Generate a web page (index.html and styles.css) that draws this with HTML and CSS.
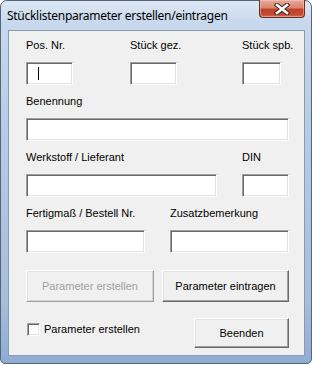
FILE: index.html
```html
<!DOCTYPE html>
<html>
<head>
<meta charset="utf-8">
<link rel="stylesheet" href="styles.css">
</head>
<body>
<div class="window">
  <div class="titlebar">
    <span class="title">Stücklistenparameter erstellen/eintragen</span>
    <div class="close">
      <svg width="16" height="12" viewBox="0 0 16 12">
        <path d="M3 2 L13 10 M13 2 L3 10" stroke="#3a2a28" stroke-width="4.6" stroke-linecap="square" fill="none"/>
        <path d="M3 2 L13 10 M13 2 L3 10" stroke="#ffffff" stroke-width="2.6" stroke-linecap="square" fill="none"/>
      </svg>
    </div>
  </div>
  <div class="client">
    <div class="row row1">
      <div class="field"><div class="label">Pos. Nr.</div><div class="input"><span class="caret"></span></div></div>
      <div class="field"><div class="label">Stück gez.</div><div class="input"></div></div>
      <div class="field"><div class="label">Stück spb.</div><div class="input"></div></div>
    </div>
    <div class="row row2">
      <div class="field"><div class="label">Benennung</div><div class="input"></div></div>
    </div>
    <div class="row row3">
      <div class="field"><div class="label">Werkstoff / Lieferant</div><div class="input"></div></div>
      <div class="field"><div class="label">DIN</div><div class="input"></div></div>
    </div>
    <div class="row row4">
      <div class="field"><div class="label">Fertigmaß / Bestell Nr.</div><div class="input"></div></div>
      <div class="field"><div class="label">Zusatzbemerkung</div><div class="input"></div></div>
    </div>
    <div class="buttons">
      <div class="button disabled">Parameter erstellen</div>
      <div class="button">Parameter eintragen</div>
    </div>
    <div class="bottom">
      <div class="check"><span class="box"></span><span class="check-label">Parameter erstellen</span></div>
      <div class="button end">Beenden</div>
    </div>
  </div>
</div>
</body>
</html>
```
FILE: styles.css
```css
html, body {
  margin: 0;
  padding: 0;
  background: #ffffff;
}
body {
  width: 312px;
  height: 365px;
  overflow: hidden;
}
.window {
  box-sizing: border-box;
  width: 312px;
  height: 364px;
  border: 1px solid #56657a;
  border-radius: 7px 7px 5px 5px;
  background: linear-gradient(to bottom, #dde8f4 0px, #c9d9ed 20px, #b7cce6 120px, #a5bedd 300px, #8eacd2 363px);
  display: flex;
  flex-direction: column;
  font-family: "Liberation Sans", Arial, sans-serif;
}
.titlebar {
  height: 29px;
  display: flex;
  justify-content: space-between;
  align-items: flex-start;
  padding-left: 6px;
  padding-right: 6px;
}
.title {
  font-family: "Noto Sans", "Open Sans", sans-serif;
  font-size: 12px;
  line-height: 16px;
  margin-top: 7px;
  color: #000;
  letter-spacing: -0.28px;
}
.close {
  width: 44px;
  height: 17px;
  margin-top: -1px;
  border: 1px solid #6b2c24;
  border-top: none;
  border-radius: 0 0 4px 4px;
  background: linear-gradient(to bottom, #e9a99b 0%, #d98571 45%, #c2412a 55%, #c24a2f 85%, #d5735a 100%);
  box-shadow: inset 0 0 0 1px rgba(255, 210, 200, 0.45);
  display: flex;
  align-items: center;
  justify-content: center;
}
.client {
  flex: 1;
  margin: 0 6px 7px 7px;
  border: 1px solid #8a9bb0;
  background: #f0f0f0;
  padding: 8px 15px 0 17px;
  font-size: 11px;
  color: #000;
}
.row {
  display: grid;
  margin-bottom: 10px;
}
.row1 { grid-template-columns: 47px 47px 47px; column-gap: 57px; }
.row1 .field:nth-child(3) { margin-left: 8px; }
.row2 { grid-template-columns: 263px; }
.row3 { grid-template-columns: 191px 47px; column-gap: 25px; }
.row4 { grid-template-columns: 119px 119px; column-gap: 25px; }
.label {
  height: 13px;
  line-height: 13px;
  white-space: nowrap;
  margin-bottom: 10px;
}
.input {
  box-sizing: border-box;
  height: 23px;
  background: #fff;
  border: 1px solid;
  border-color: #a0a0a0 #ffffff #ffffff #a0a0a0;
  box-shadow: inset 1px 1px 0 #696969, inset -1px -1px 0 #e3e3e3;
  position: relative;
}
.caret {
  position: absolute;
  left: 11px;
  top: 4px;
  width: 1px;
  height: 13px;
  background: #000;
}
.buttons {
  display: grid;
  grid-template-columns: 128px 127px;
  column-gap: 8px;
  margin-top: 17px;
}
.button {
  box-sizing: border-box;
  height: 32px;
  background: #f0f0f0;
  border: 1px solid;
  border-color: #ffffff #696969 #696969 #ffffff;
  box-shadow: inset -1px -1px 0 #a0a0a0, inset 1px 1px 0 #e3e3e3;
  display: flex;
  align-items: center;
  justify-content: center;
  white-space: nowrap;
}
.button.disabled {
  color: #a0a0a0;
  border-color: #ffffff #a0a0a0 #a0a0a0 #ffffff;
  box-shadow: inset -1px -1px 0 #d4d4d4, inset 1px 1px 0 #e3e3e3;
}
.bottom {
  display: flex;
  justify-content: space-between;
  align-items: flex-start;
  margin-top: 16px;
}
.check {
  display: flex;
  align-items: center;
  margin-top: 5px;
}
.box {
  box-sizing: border-box;
  width: 13px;
  height: 13px;
  background: #fff;
  border: 1px solid;
  border-color: #a0a0a0 #ffffff #ffffff #a0a0a0;
  box-shadow: inset 1px 1px 0 #696969, inset -1px -1px 0 #e3e3e3;
  margin-left: 1px;
  margin-right: 4px;
}
.check-label {
  line-height: 13px;
}
.button.end {
  width: 95px;
  height: 30px;
}
```
